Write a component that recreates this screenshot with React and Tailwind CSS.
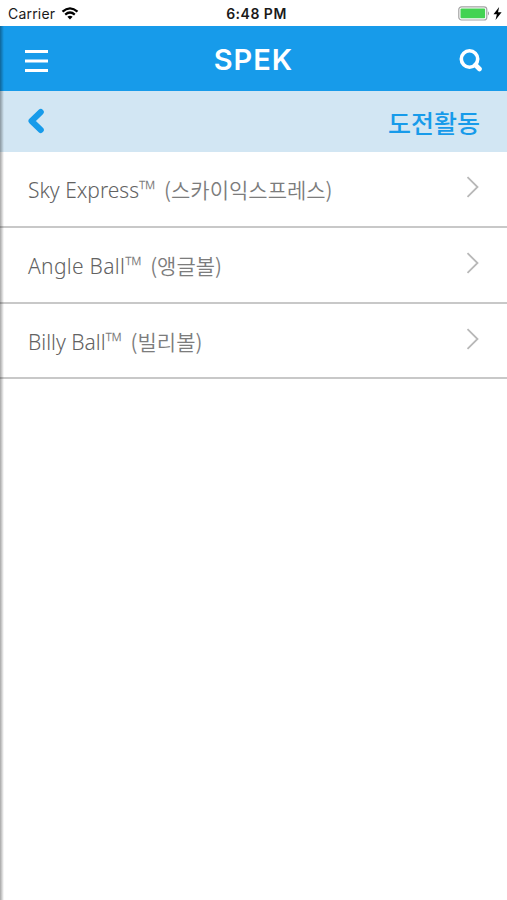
import React from 'react';

const activities = [
  { name: 'Sky Express', korean: '(스카이익스프레스)', spacing: 'tracking-normal' },
  { name: 'Angle Ball', korean: '(앵글볼)', spacing: 'tracking-[0.3px]' },
  { name: 'Billy Ball', korean: '(빌리볼)', spacing: 'tracking-normal' },
];

const StatusBar = () => {
  return (
    <div className="grid grid-cols-3 items-center h-[26px] pl-2 pr-[5px] bg-white text-[#1a1a1a] font-['Inter',sans-serif]">
      <div className="flex items-center gap-[6px]">
        <span className="pt-px text-[14px] leading-[26px] tracking-[0.2px]">Carrier</span>
        <svg width="18" height="13" viewBox="0 0 17 13" fill="none" stroke="#000" strokeWidth="2.2">
          <path d="M1 4.7 Q8.5 -1.9 16 4.7" />
          <path d="M3.7 7.6 Q8.5 3.4 13.3 7.6" />
          <path d="M8.5 12.4 L5.9 9.8 Q8.5 7.7 11.1 9.8 Z" fill="#000" stroke="none" />
        </svg>
      </div>
      <span className="pt-px pl-[3px] text-center text-[14px] leading-[26px] font-semibold tracking-[0.5px] whitespace-nowrap">6:48 PM</span>
      <div className="flex items-center justify-end gap-[3px]">
        <svg width="32" height="15" viewBox="0 0 32 15" fill="none">
          <rect x="0.8" y="0.8" width="28" height="13.2" rx="2.8" stroke="#a3a3a3" strokeWidth="1.2" />
          <rect x="2.5" y="2.5" width="24.6" height="9.8" rx="1" fill="#43d352" />
          <path d="M30 5.2 Q32 7.4 30 9.6 Z" fill="#999" />
        </svg>
        <svg width="9" height="13" viewBox="0 0 8 12" fill="#000">
          <path d="M5.5 0 L0.3 6.6 H3.4 L2.2 12 L7.8 4.9 H4.5 Z" />
        </svg>
      </div>
    </div>
  );
};

const Header = () => {
  return (
    <header className="flex items-center justify-between h-[65px] px-[25px] bg-[#179bea]">
      <svg width="23" height="23" viewBox="0 0 23 23" fill="#fff" className="mt-[5px]">
        <rect y="0" width="23" height="3" />
        <rect y="9.5" width="23" height="3" />
        <rect y="19" width="23" height="3" />
      </svg>
      <h1 className="mt-0.5 text-white text-[29px] leading-none font-semibold tracking-[1px] font-['Inter',sans-serif]">SPEK</h1>
      <svg width="23" height="23" viewBox="0 0 23 23" fill="none" stroke="#fff" className="mt-[3px]">
        <circle cx="10.5" cy="10" r="8.2" strokeWidth="3.6" />
        <path d="M16.5 16 L20.5 20" strokeWidth="4.6" strokeLinecap="round" />
      </svg>
    </header>
  );
};

const TitleBar = () => {
  return (
    <div className="flex items-center justify-between h-[61px] pl-[27px] pr-[27px] bg-[#d2e6f3]">
      <svg width="18" height="26" viewBox="0 0 18 26" fill="none" stroke="#179bea" strokeWidth="6" strokeLinecap="round" strokeLinejoin="round" className="-mt-0.5">
        <path d="M13.8 4 L4.5 13 L13.8 22" />
      </svg>
      <h2 className="mt-px text-[#179bea] text-[25px] leading-none font-medium font-['Noto_Sans_CJK_KR',sans-serif]">도전활동</h2>
    </div>
  );
};

const ActivityRow = ({ name, korean, spacing }) => {
  return (
    <li className="flex items-center justify-between h-[75.7px] pl-7 pr-[28px] border-b-2 border-[#c8c8c8] text-[#7c7c7c]">
      <span className="flex items-baseline pt-px text-[21px] leading-[30px] whitespace-nowrap">
        <span className={`text-[#626262] font-[350] font-['Noto_Sans','Open_Sans',sans-serif] ${spacing}`}>{name}</span>
        <span className="w-[19px] mr-[6px] text-[24px] font-light leading-[20px] font-['Open_Sans',sans-serif]">™</span>
        <span className="font-[350] font-['Noto_Sans_CJK_KR',sans-serif]">{korean}</span>
      </span>
      <svg width="13" height="22" viewBox="0 0 13 22" fill="none" stroke="#b8b8b8" strokeWidth="1.8" className="-mt-1">
        <path d="M1.5 1.2 L11.5 11 L1.5 20.8" />
      </svg>
    </li>
  );
};

const App = () => {
  return (
    <div className="relative w-full h-screen overflow-hidden bg-white">
      <StatusBar />
      <Header />
      <TitleBar />
      <ul className="pt-[0.4px]">
        {activities.map((item) => (
          <ActivityRow key={item.name} name={item.name} korean={item.korean} spacing={item.spacing} />
        ))}
      </ul>
      <div className="absolute left-0 top-[26px] bottom-0 w-1 bg-linear-to-r from-black/35 to-transparent" />
    </div>
  );
};

export default App;
